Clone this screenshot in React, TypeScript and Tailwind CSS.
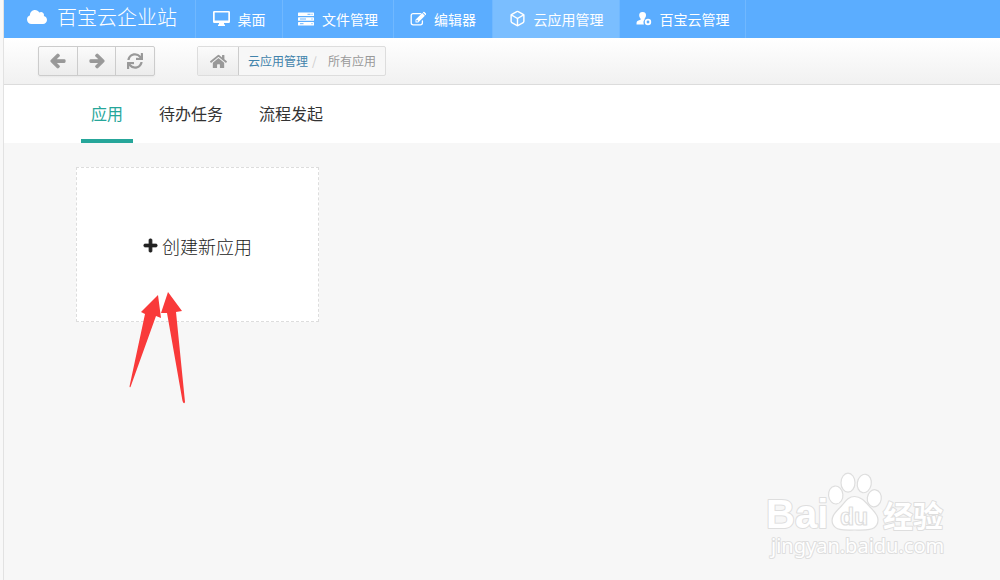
import { useState, type ReactNode } from 'react';
import { FaArrowLeft, FaArrowRight, FaCloud, FaHome, FaPlus, FaSync } from 'react-icons/fa';
import { FiBox } from 'react-icons/fi';

type NavItem = { id: string; label: string; icon: ReactNode; width: string };

// ── Icons ──────────────────────────────────────────────────────
function DesktopIcon() {
  return (
    <svg width="17" height="15" viewBox="0 0 17 15" fill="currentColor" aria-hidden="true">
      <path
        fillRule="evenodd"
        d="M1.2 0h14.6Q17 0 17 1.2v9.6Q17 12 15.8 12H11v1.6h1V15H5v-1.4h1V12H1.2Q0 12 0 10.8V1.2Q0 0 1.2 0ZM1.7 1.6v8h13.6v-8Z"
      />
    </svg>
  );
}

function ServerIcon() {
  return (
    <svg width="16" height="14" viewBox="0 0 16 14" aria-hidden="true">
      <g fill="currentColor">
        <rect y="0.5" width="16" height="3.6" rx="0.6" />
        <rect y="5.2" width="16" height="3.6" rx="0.6" />
        <rect y="9.9" width="16" height="3.6" rx="0.6" />
      </g>
      <path d="M9.5 2.3h3M2 7h6M2 11.7h3.5" stroke="#5badff" strokeWidth="0.9" />
      <path d="M14 1.8v1M14 6.5v1M14 11.2v1" stroke="#5badff" strokeWidth="1" />
    </svg>
  );
}

function EditIcon() {
  return (
    <svg width="16" height="16" viewBox="0 0 16 16" aria-hidden="true">
      <path
        d="M10.6 2.6H3.2Q1.2 2.6 1.2 4.6v7.2q0 2 2 2h7.2q2 0 2-2V10"
        fill="none"
        stroke="currentColor"
        strokeWidth="1.3"
        strokeLinecap="round"
      />
      <path
        fillRule="evenodd"
        fill="currentColor"
        d="M12.2 2.1 14.9 4.8 8.2 11.5H5.5V8.8ZM6.4 9.3v1.3h1.3l.6-.6L7 8.7ZM12.8 1.5l.6-.6q.5-.5 1.1 0l1.6 1.6q.5.6 0 1.1l-.6.6Z"
      />
    </svg>
  );
}

function UserCogIcon() {
  return (
    <svg width="16" height="15" viewBox="0 0 16 15" fill="currentColor" aria-hidden="true">
      <path d="M6.6 1C9.2 1 10.2 2.5 10 4.6 9.9 6 9.3 7 8.6 7.7v.9C7.5 9.6 7.1 11.5 7.9 13.4H.5c0-2.5.2-3.3 2-3.9L4.6 8.8V7.7C3.9 7 3.3 6 3.2 4.6 3 2.5 4 1 6.6 1Z" />
      <circle cx="12" cy="11" r="2.3" fill="none" stroke="currentColor" strokeWidth="1.8" />
    </svg>
  );
}

const NAV_ITEMS: NavItem[] = [
  { id: 'desktop', label: '桌面', icon: <DesktopIcon />, width: 'w-[87px]' },
  { id: 'files', label: '文件管理', icon: <ServerIcon />, width: 'w-[111px]' },
  { id: 'editor', label: '编辑器', icon: <EditIcon />, width: 'w-[99px]' },
  { id: 'apps', label: '云应用管理', icon: <FiBox size={17} />, width: 'w-[127px]' },
  { id: 'cloud', label: '百宝云管理', icon: <UserCogIcon />, width: 'w-[126px]' },
];

const TABS = ['应用', '待办任务', '流程发起'];

// ── Header bar ─────────────────────────────────────────────────
function Header() {
  const [active, setActive] = useState('apps');

  return (
    <header className="flex h-[38px] bg-[#5badff] text-white">
      <a href="#home" className="flex w-[192px] shrink-0 items-center gap-[10px] border-r border-[#70b8ff] pb-1 pl-[23px]">
        <FaCloud size={20} />
        <span className="text-[20px] leading-6 font-light">百宝云企业站</span>
      </a>
      <nav className="flex">
        {NAV_ITEMS.map(item => (
          <button
            key={item.id}
            type="button"
            onClick={() => setActive(item.id)}
            className={`flex ${item.width} shrink-0 items-center justify-center gap-2 border-r border-[#70b8ff] pb-px text-sm whitespace-nowrap ${
              active === item.id ? 'bg-[#7abeff]' : ''
            }`}
          >
            {item.icon}
            <span>{item.label}</span>
          </button>
        ))}
      </nav>
    </header>
  );
}

// ── Toolbar with history buttons and breadcrumb ────────────────
function Toolbar() {
  const history = [
    { label: '后退', icon: <FaArrowLeft size={16} strokeWidth={40} /> },
    { label: '前进', icon: <FaArrowRight size={16} strokeWidth={40} /> },
    { label: '刷新', icon: <FaSync size={16} /> },
  ];

  return (
    <div className="flex h-[47px] items-center gap-[42px] border-b border-[#dcdcdc] bg-linear-to-b from-white to-[#f1f1f1] pl-[34px]">
      <div className="flex h-[30px] w-[117px] divide-x divide-[#cccccc] rounded-xs border border-[#cccccc] bg-linear-to-b from-[#fbfbfb] to-[#ececec] text-[#999999] shadow-xs">
        {history.map(btn => (
          <button key={btn.label} type="button" aria-label={btn.label} className="flex flex-1 items-center justify-center">
            {btn.icon}
          </button>
        ))}
      </div>

      <div className="flex h-[30px] rounded-xs border border-[#dddddd] bg-[#f7f7f7] text-xs">
        <a
          href="#home"
          aria-label="首页"
          className="flex w-[41px] items-center justify-center border-r border-[#cccccc] bg-linear-to-b from-[#fbfbfb] to-[#ececec] text-[#999999]"
        >
          <FaHome size={17} />
        </a>
        <nav className="flex items-center px-[9px]">
          <a href="#apps" className="text-[#4183ab]">云应用管理</a>
          <span className="w-5 pl-1 text-[#cccccc]">/</span>
          <span className="text-[#999999]">所有应用</span>
        </nav>
      </div>
    </div>
  );
}

// ── Page tabs ──────────────────────────────────────────────────
function Tabs() {
  const [current, setCurrent] = useState(TABS[0]);

  return (
    <div className="flex h-[58px] gap-4 bg-white pl-[77px]">
      {TABS.map(tab => (
        <button
          key={tab}
          type="button"
          onClick={() => setCurrent(tab)}
          className={`border-b-4 px-[10px] pt-[2px] text-base ${
            current === tab ? 'border-[#26a69a] text-[#26a69a]' : 'border-transparent text-[#333333]'
          }`}
        >
          {tab}
        </button>
      ))}
    </div>
  );
}

// Two red pointers aimed at the create card
function Pointers() {
  return (
    <svg
      className="pointer-events-none absolute top-[124px] left-[53px]"
      width="60"
      height="116"
      viewBox="0 0 60 116"
      fill="#f93a3a"
      aria-hidden="true"
    >
      <path d="M29 4 L32 27 L27 25 L1.5 96 Q0 97 .8 94 L16 23 L12 21 Z" />
      <path d="M39 1 L53 20 L47 21 L56 111 Q55 114 53.5 110 L38 22 L32 22 Z" />
    </svg>
  );
}

function Watermark() {
  return (
    <svg
      className="pointer-events-none absolute right-[48px] bottom-[16px]"
      width="186"
      height="94"
      viewBox="0 0 186 94"
      fill="#ffffff"
      stroke="#dedede"
      strokeWidth="2"
      strokeLinejoin="round"
      role="img"
      aria-label="Baidu 经验"
    >
      <g className="font-['Liberation_Sans',sans-serif] font-bold" style={{ paintOrder: 'stroke' }}>
        <text x="0" y="58" fontSize="40">Bai</text>
      </g>
      <g strokeWidth="1.2">
        <ellipse cx="69.7" cy="25" rx="7.2" ry="9" transform="rotate(-6 69.7 25)" />
        <ellipse cx="82" cy="12.7" rx="7" ry="9.5" />
        <ellipse cx="98.3" cy="13.5" rx="7" ry="9.3" transform="rotate(10 98.3 13.5)" />
        <ellipse cx="108.3" cy="28.3" rx="7" ry="8.6" transform="rotate(8 108.3 28.3)" />
        <path d="M88.5 26.5C95 26.5 99 31.5 104 37 110 43 114 48 111 54.5 108 61 98 60 88.5 60 79 60 70 61 67 54.5 64 48 68.500 43 74 37.500 79 32 82 26.500 88.500 26.500Z" />
      </g>
      <text
        x="74"
        y="55"
        fontSize="23"
        fill="#ffffff"
        strokeWidth="1.2"
        className="font-['Liberation_Sans',sans-serif] font-bold"
      >
        du
      </text>
      <text
        x="117"
        y="57"
        fontSize="30"
        className="font-['Noto_Sans_CJK_SC',sans-serif] font-bold"
        style={{ paintOrder: 'stroke' }}
      >
        经验
      </text>
      <text
        x="5"
        y="83"
        fontSize="20"
        className="font-['Noto_Sans',sans-serif]"
        style={{ paintOrder: 'stroke' }}
      >
        jingyan.baidu.com
      </text>
    </svg>
  );
}

// ── Main App ───────────────────────────────────────────────────
export default function App() {
  return (
    <div className="flex min-h-screen bg-[#f7f7f7] font-['Noto_Sans_CJK_SC',sans-serif]">
      {/* Collapsed side rail */}
      <div className="w-1 shrink-0 border-r border-[#e2e2e2] bg-[#f8f8f8]" />

      <div className="flex min-w-0 flex-1 flex-col">
        <Header />
        <Toolbar />
        <Tabs />

        <main className="relative flex-1 px-[72px] pt-6">
          <div className="relative w-[243px]">
            <button
              type="button"
              className="flex h-[155px] w-full items-center justify-center gap-1 border border-dashed border-[#dddddd] bg-white pt-[2px] text-lg font-light text-[#222222]"
            >
              <FaPlus size={15} strokeWidth={30} />
              <span>创建新应用</span>
            </button>
            <Pointers />
          </div>
          <Watermark />
        </main>
      </div>
    </div>
  );
}
